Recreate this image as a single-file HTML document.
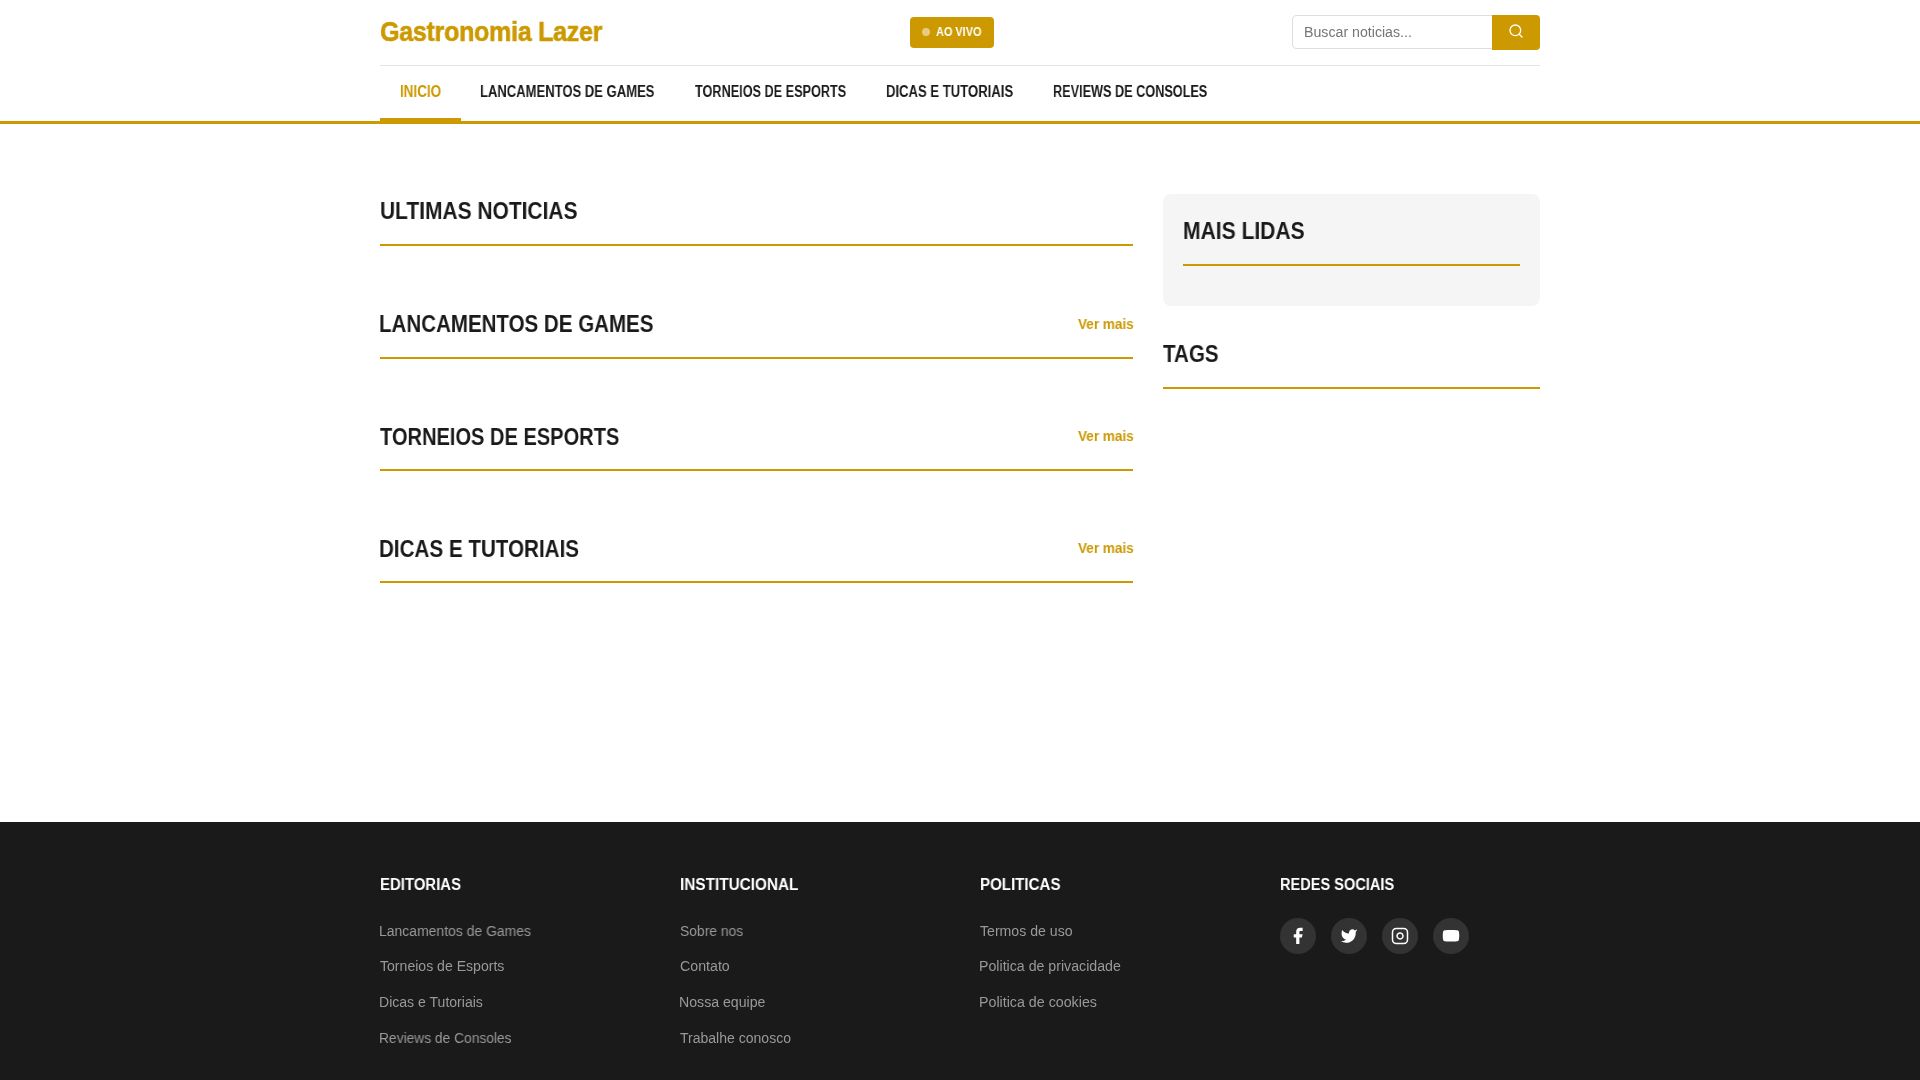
<!DOCTYPE html>
<html lang="pt-BR">
<head>
<meta charset="utf-8">
<title>Gastronomia Lazer</title>
<style>
*{margin:0;padding:0;box-sizing:border-box;}
html,body{width:1920px;height:1080px;overflow:hidden;background:#fff;}
body{font-family:"Liberation Sans",sans-serif;color:#1a1a1a;position:relative;}
.abs{position:absolute;white-space:nowrap;transform-origin:0 0;will-change:transform;}
.logo{font-size:28px;font-weight:bold;color:#cc9900;line-height:34px;letter-spacing:-0.3px;-webkit-text-stroke:0.6px #cc9900;}
.live{left:910px;top:17px;width:84px;height:31px;background:#cc9900;border-radius:4px;}
.live .dot{position:absolute;left:12px;top:11px;width:8px;height:8px;border-radius:50%;background:rgba(255,255,255,0.5);}
.t{font-size:12px;font-weight:bold;color:#fff;line-height:14px;}
.search{left:1292px;top:15px;width:201px;height:34px;border:1px solid #ddd;border-radius:4px 0 0 4px;}
.ph{font-size:14px;line-height:16px;color:#757575;}
.sbtn{left:1492px;top:15px;width:48px;height:35px;background:#cc9900;border-radius:0 4px 4px 0;}
.sep{left:380px;top:65px;width:1160px;height:1px;background:#e5e5e5;}
.nav{font-size:15.6px;font-weight:bold;line-height:18px;color:#1a1a1a;}
.nav.active{color:#cc9900;}
.navline{left:0;top:121px;width:1920px;height:3px;background:#cc9900;}
.navact{left:380px;top:118px;width:81px;height:3px;background:#cc9900;}
.h2{font-size:23px;font-weight:bold;line-height:26px;color:#1a1a1a;}
.gold{background:#cc9900;height:2px;}
.more{font-size:14.5px;font-weight:bold;color:#cc9900;line-height:17px;}
.box{left:1163px;top:194px;width:377px;height:112px;background:#f5f5f5;border-radius:8px;}
.footer{left:0;top:822px;width:1920px;height:258px;background:#1a1a1a;}
.fh{font-size:16px;font-weight:bold;color:#fff;line-height:19px;}
.fl{font-size:14px;color:#999;line-height:16px;}
.soc{top:918px;width:36px;height:36px;border-radius:50%;background:#333;}
.soc svg{position:absolute;}
</style>
</head>
<body>
<div id="logo" class="abs logo" style="left:380px;top:15px;transform:scaleX(0.8934);">Gastronomia Lazer</div>
<div class="abs live"><span class="dot"></span></div>
<div id="live" class="abs t" style="left:936px;top:25px;transform:scaleX(0.9089);">AO VIVO</div>
<div class="abs search"></div>
<div id="ph" class="abs ph" style="left:1304px;top:24px;transform:scaleX(1.0121);">Buscar noticias...</div>
<div class="abs sbtn"><svg style="position:absolute;left:16px;top:8px" width="16" height="16" viewBox="0 0 24 24" fill="none" stroke="#fff" stroke-width="2" stroke-linecap="round" stroke-linejoin="round"><circle cx="11" cy="11" r="8"/><line x1="21" y1="21" x2="16.65" y2="16.65"/></svg></div>
<div class="abs sep"></div>
<div id="n1" class="abs nav active" style="left:400px;top:83px;transform:scaleX(0.8619);">INICIO</div>
<div id="n2" class="abs nav" style="left:480px;top:83px;transform:scaleX(0.8367);">LANCAMENTOS DE GAMES</div>
<div id="n3" class="abs nav" style="left:695px;top:83px;transform:scaleX(0.813);">TORNEIOS DE ESPORTS</div>
<div id="n4" class="abs nav" style="left:886px;top:83px;transform:scaleX(0.8405);">DICAS E TUTORIAIS</div>
<div id="n5" class="abs nav" style="left:1053px;top:83px;transform:scaleX(0.8131);">REVIEWS DE CONSOLES</div>
<div class="abs navact"></div>
<div class="abs navline"></div>

<div id="h1" class="abs h2" style="left:380px;top:198px;transform:scaleX(0.911);">ULTIMAS NOTICIAS</div>
<div class="abs gold" style="left:380px;top:244px;width:753px"></div>
<div id="h2" class="abs h2" style="left:379px;top:311px;transform:scaleX(0.8924);">LANCAMENTOS DE GAMES</div>
<div id="m2" class="abs more" style="left:1078px;top:316px;transform:scaleX(0.9345);">Ver mais</div>
<div class="abs gold" style="left:380px;top:357px;width:753px"></div>
<div id="h3" class="abs h2" style="left:380px;top:424px;transform:scaleX(0.8723);">TORNEIOS DE ESPORTS</div>
<div id="m3" class="abs more" style="left:1078px;top:428px;transform:scaleX(0.9345);">Ver mais</div>
<div class="abs gold" style="left:380px;top:469px;width:753px"></div>
<div id="h4" class="abs h2" style="left:379px;top:536px;transform:scaleX(0.8964);">DICAS E TUTORIAIS</div>
<div id="m4" class="abs more" style="left:1078px;top:540px;transform:scaleX(0.9345);">Ver mais</div>
<div class="abs gold" style="left:380px;top:581px;width:753px"></div>

<div class="abs box"></div>
<div id="hm" class="abs h2" style="left:1183px;top:218px;transform:scaleX(0.9154);">MAIS LIDAS</div>
<div class="abs gold" style="left:1183px;top:264px;width:337px"></div>
<div id="ht" class="abs h2" style="left:1163px;top:341px;transform:scaleX(0.8942);">TAGS</div>
<div class="abs gold" style="left:1163px;top:387px;width:377px"></div>

<div class="abs footer"></div>
<div id="f1" class="abs fh" style="left:380px;top:875px;transform:scaleX(0.9326);">EDITORIAS</div>
<div id="f2" class="abs fh" style="left:680px;top:875px;transform:scaleX(0.9581);">INSTITUCIONAL</div>
<div id="f3" class="abs fh" style="left:980px;top:875px;transform:scaleX(0.9433);">POLITICAS</div>
<div id="f4" class="abs fh" style="left:1280px;top:875px;transform:scaleX(0.9103);">REDES SOCIAIS</div>
<div id="l1" class="abs fl" style="left:379px;top:923px;transform:scaleX(0.9964);">Lancamentos de Games</div>
<div id="l2" class="abs fl" style="left:380px;top:958px;transform:scaleX(1.0055);">Torneios de Esports</div>
<div id="l3" class="abs fl" style="left:379px;top:994px;transform:scaleX(1.0037);">Dicas e Tutoriais</div>
<div id="l4" class="abs fl" style="left:379px;top:1030px;transform:scaleX(0.9849);">Reviews de Consoles</div>
<div id="l5" class="abs fl" style="left:680px;top:923px;transform:scaleX(0.9904);">Sobre nos</div>
<div id="l6" class="abs fl" style="left:680px;top:958px;transform:scaleX(1.014);">Contato</div>
<div id="l7" class="abs fl" style="left:679px;top:994px;transform:scaleX(1.0096);">Nossa equipe</div>
<div id="l8" class="abs fl" style="left:680px;top:1030px;transform:scaleX(1.002);">Trabalhe conosco</div>
<div id="l9" class="abs fl" style="left:980px;top:923px;transform:scaleX(1.0085);">Termos de uso</div>
<div id="l10" class="abs fl" style="left:979px;top:958px;transform:scaleX(1.0127);">Politica de privacidade</div>
<div id="l11" class="abs fl" style="left:979px;top:994px;transform:scaleX(1.0172);">Politica de cookies</div>
<div class="abs soc" style="left:1280px"><svg style="left:8px;top:8px" width="20" height="20" viewBox="-0.116 -0.265 24.75 24.75" fill="#fff"><path d="M18 2h-3a5 5 0 0 0-5 5v3H7v4h3v8h4v-8h3l1-4h-4V7a1 1 0 0 1 1-1h3z"/></svg></div>
<div class="abs soc" style="left:1331px"><svg style="left:9px;top:9px" width="18" height="18" viewBox="0 0 24 24" fill="#fff"><path d="M23 3a10.9 10.9 0 0 1-3.140 1.530 4.480 4.480 0 0 0-7.860 3v1A10.660 10.660 0 0 1 3 4s-4 9 5 13a11.640 11.640 0 0 1-7 2c9 5 20 0 20-11.500a4.500 4.500 0 0 0-.080-.830A7.720 7.720 0 0 0 23 3z"/></svg></div>
<div class="abs soc" style="left:1382px"><svg style="left:9px;top:9px" width="18" height="18" viewBox="0 0 24 24" fill="none" stroke="#fff" stroke-width="2" stroke-linecap="round" stroke-linejoin="round"><rect x="2" y="2" width="20" height="20" rx="5" ry="5"/><path d="M16 11.370A4 4 0 1 1 12.630 8 4 4 0 0 1 16 11.370z"/></svg></div>
<div class="abs soc" style="left:1433px"><svg style="left:9px;top:9px" width="18" height="18" viewBox="0 0 24 24" fill="#fff"><path d="M22.540 6.420a2.780 2.780 0 0 0-1.940-2C18.880 4 12 4 12 4s-6.880 0-8.600.460a2.780 2.780 0 0 0-1.940 2A29 29 0 0 0 1 11.750a29 29 0 0 0 .460 5.330A2.780 2.780 0 0 0 3.400 19c1.720.460 8.600.460 8.600.460s6.880 0 8.600-.460a2.780 2.780 0 0 0 1.940-2 29 29 0 0 0 .460-5.250 29 29 0 0 0-.460-5.330z"/></svg></div>
</body>
</html>
